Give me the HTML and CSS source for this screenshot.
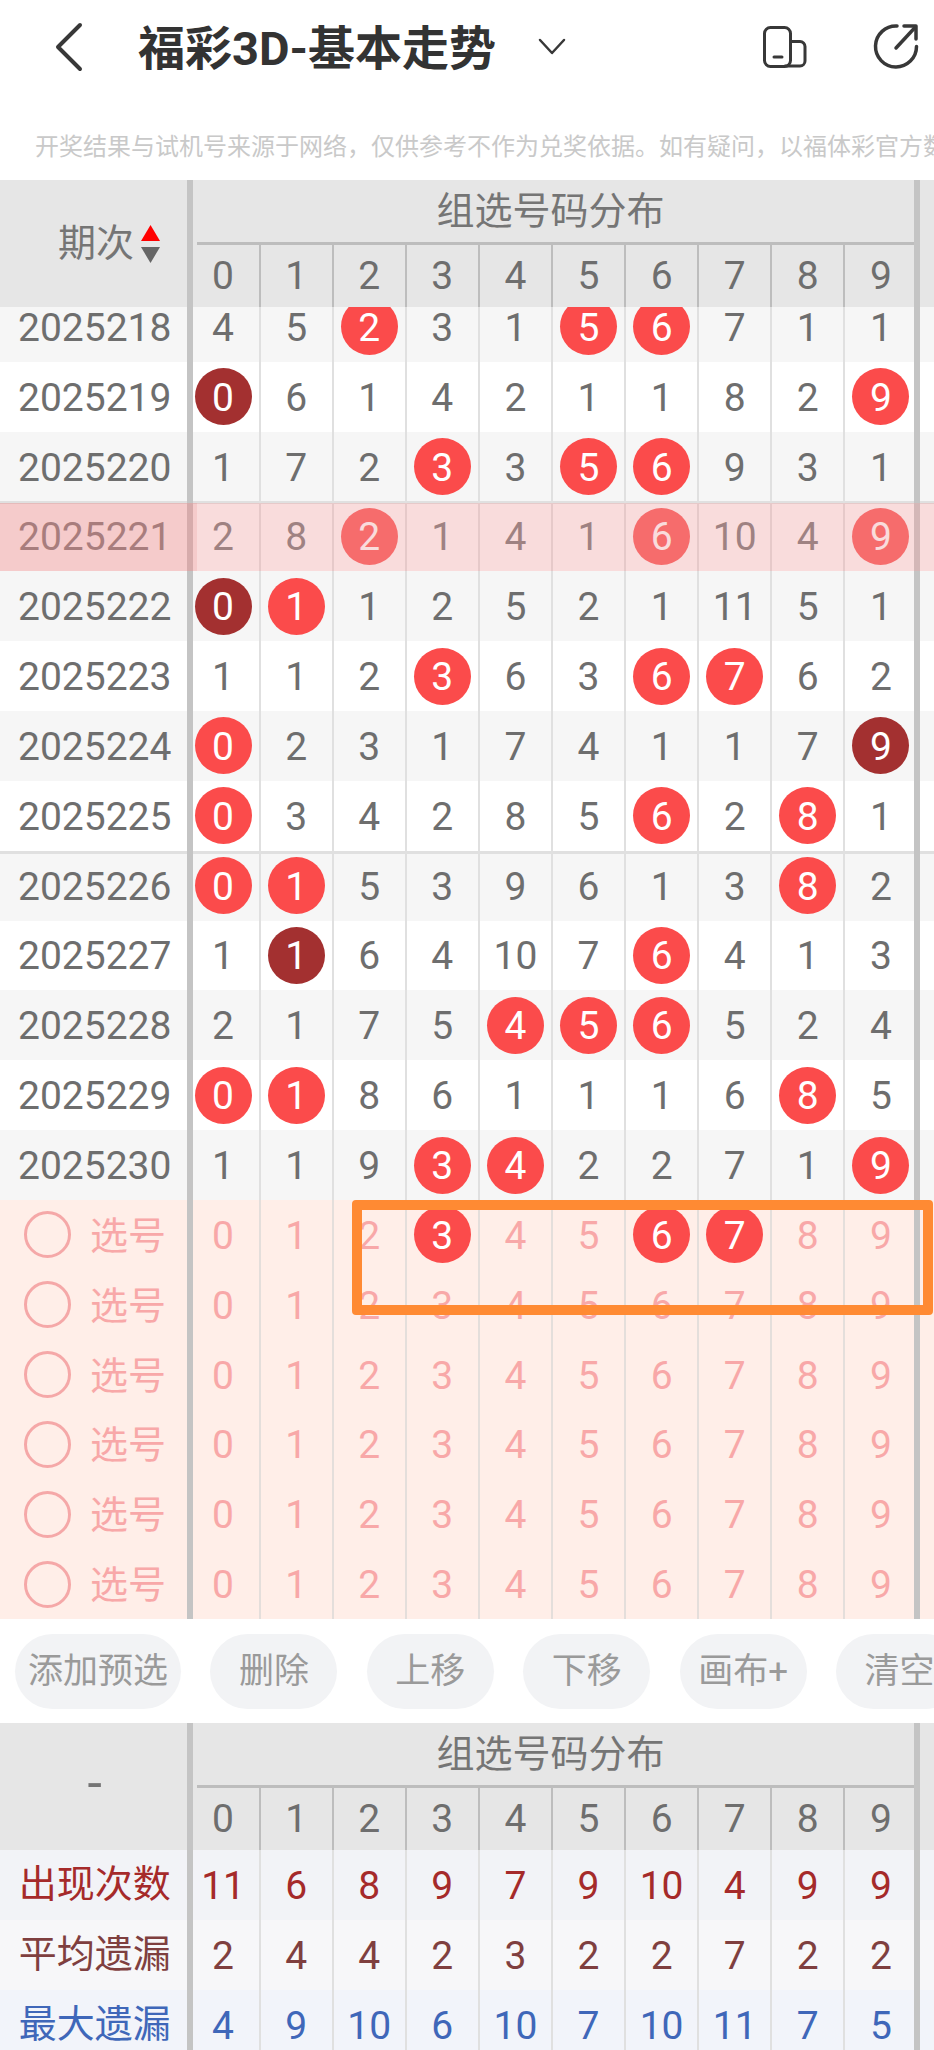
FILE: index.html
```html
<!DOCTYPE html>
<html lang="zh">

	<head>
		<meta charset="utf-8">
		<title>福彩3D-基本走势</title>
		<link rel="stylesheet" href="styles.css">
	</head>

	<body>

		<div class="top-bar">
			<svg class="icon-back" width="30" height="50" viewBox="0 0 30 50"><path d="M26 3 L4 25 L26 47"/></svg>
			<h1 class="title">福彩3D-基本走势</h1>
			<svg class="icon-down" width="28" height="18" viewBox="0 0 28 18"><path d="M2 2 L14 15 L26 2"/></svg>
			<svg class="icon-device" width="44" height="44" viewBox="0 0 44 44"><rect x="1.5" y="2.5" width="26" height="39" rx="6"/><path d="M11 32 H19"/><path d="M28 16.5 H37 A5 5 0 0 1 42 21.5 V36 A5 5 0 0 1 37 41 H22"/></svg>
			<svg class="icon-share" width="48" height="48" viewBox="0 0 48 48"><path d="M25 3 A20.5 20.5 0 1 0 44.5 23.5"/><path d="M24 25 L43 4.5"/><path d="M32 3 H44 V16"/></svg>
		</div>

		<p class="notice">开奖结果与试机号来源于网络，仅供参考不作为兑奖依据。如有疑问，以福体彩官方数据为准。</p>

		<div class="table">
			<div class="head">
				<div class="head-side"><span class="head-text">期次</span>
					<svg class="sort" width="19" height="38" viewBox="0 0 19 38"><path class="sort-up" d="M9.5 0 L19 16 H0 Z"/><path class="sort-down" d="M0 22 H19 L9.5 38 Z"/></svg>
				</div>
				<div class="head-title">组选号码分布</div>
				<div class="c">0</div><div class="c">1</div><div class="c">2</div><div class="c">3</div><div class="c">4</div><div class="c">5</div><div class="c">6</div><div class="c">7</div><div class="c">8</div><div class="c">9</div>
			</div>

			<div class="scroll-area">
				<div class="scroll-inner">
					<div class="row alt"><div class="side">2025218</div><div class="c">4</div><div class="c">5</div><div class="c"><span class="ball">2</span></div><div class="c">3</div><div class="c">1</div><div class="c"><span class="ball">5</span></div><div class="c"><span class="ball">6</span></div><div class="c">7</div><div class="c">1</div><div class="c">1</div></div>
					<div class="row"><div class="side">2025219</div><div class="c"><span class="ball dark">0</span></div><div class="c">6</div><div class="c">1</div><div class="c">4</div><div class="c">2</div><div class="c">1</div><div class="c">1</div><div class="c">8</div><div class="c">2</div><div class="c"><span class="ball">9</span></div></div>
					<div class="row alt"><div class="side">2025220</div><div class="c">1</div><div class="c">7</div><div class="c">2</div><div class="c"><span class="ball">3</span></div><div class="c">3</div><div class="c"><span class="ball">5</span></div><div class="c"><span class="ball">6</span></div><div class="c">9</div><div class="c">3</div><div class="c">1</div></div>
					<div class="row group-top current"><div class="side">2025221</div><div class="c">2</div><div class="c">8</div><div class="c"><span class="ball">2</span></div><div class="c">1</div><div class="c">4</div><div class="c">1</div><div class="c"><span class="ball">6</span></div><div class="c">10</div><div class="c">4</div><div class="c"><span class="ball">9</span></div></div>
					<div class="row alt"><div class="side">2025222</div><div class="c"><span class="ball dark">0</span></div><div class="c"><span class="ball">1</span></div><div class="c">1</div><div class="c">2</div><div class="c">5</div><div class="c">2</div><div class="c">1</div><div class="c">11</div><div class="c">5</div><div class="c">1</div></div>
					<div class="row"><div class="side">2025223</div><div class="c">1</div><div class="c">1</div><div class="c">2</div><div class="c"><span class="ball">3</span></div><div class="c">6</div><div class="c">3</div><div class="c"><span class="ball">6</span></div><div class="c"><span class="ball">7</span></div><div class="c">6</div><div class="c">2</div></div>
					<div class="row alt"><div class="side">2025224</div><div class="c"><span class="ball">0</span></div><div class="c">2</div><div class="c">3</div><div class="c">1</div><div class="c">7</div><div class="c">4</div><div class="c">1</div><div class="c">1</div><div class="c">7</div><div class="c"><span class="ball dark">9</span></div></div>
					<div class="row"><div class="side">2025225</div><div class="c"><span class="ball">0</span></div><div class="c">3</div><div class="c">4</div><div class="c">2</div><div class="c">8</div><div class="c">5</div><div class="c"><span class="ball">6</span></div><div class="c">2</div><div class="c"><span class="ball">8</span></div><div class="c">1</div></div>
					<div class="row alt group-top"><div class="side">2025226</div><div class="c"><span class="ball">0</span></div><div class="c"><span class="ball">1</span></div><div class="c">5</div><div class="c">3</div><div class="c">9</div><div class="c">6</div><div class="c">1</div><div class="c">3</div><div class="c"><span class="ball">8</span></div><div class="c">2</div></div>
					<div class="row"><div class="side">2025227</div><div class="c">1</div><div class="c"><span class="ball dark">1</span></div><div class="c">6</div><div class="c">4</div><div class="c">10</div><div class="c">7</div><div class="c"><span class="ball">6</span></div><div class="c">4</div><div class="c">1</div><div class="c">3</div></div>
					<div class="row alt"><div class="side">2025228</div><div class="c">2</div><div class="c">1</div><div class="c">7</div><div class="c">5</div><div class="c"><span class="ball">4</span></div><div class="c"><span class="ball">5</span></div><div class="c"><span class="ball">6</span></div><div class="c">5</div><div class="c">2</div><div class="c">4</div></div>
					<div class="row"><div class="side">2025229</div><div class="c"><span class="ball">0</span></div><div class="c"><span class="ball">1</span></div><div class="c">8</div><div class="c">6</div><div class="c">1</div><div class="c">1</div><div class="c">1</div><div class="c">6</div><div class="c"><span class="ball">8</span></div><div class="c">5</div></div>
					<div class="row alt"><div class="side">2025230</div><div class="c">1</div><div class="c">1</div><div class="c">9</div><div class="c"><span class="ball">3</span></div><div class="c"><span class="ball">4</span></div><div class="c">2</div><div class="c">2</div><div class="c">7</div><div class="c">1</div><div class="c"><span class="ball">9</span></div></div>
				</div>
			</div>

			<div class="picks">
				<div class="row"><div class="side pick-label"><span class="radio"></span>选号</div><div class="c">0</div><div class="c">1</div><div class="c">2</div><div class="c"><span class="ball">3</span></div><div class="c">4</div><div class="c">5</div><div class="c"><span class="ball">6</span></div><div class="c"><span class="ball">7</span></div><div class="c">8</div><div class="c">9</div></div>
				<div class="row"><div class="side pick-label"><span class="radio"></span>选号</div><div class="c">0</div><div class="c">1</div><div class="c">2</div><div class="c">3</div><div class="c">4</div><div class="c">5</div><div class="c">6</div><div class="c">7</div><div class="c">8</div><div class="c">9</div></div>
				<div class="row"><div class="side pick-label"><span class="radio"></span>选号</div><div class="c">0</div><div class="c">1</div><div class="c">2</div><div class="c">3</div><div class="c">4</div><div class="c">5</div><div class="c">6</div><div class="c">7</div><div class="c">8</div><div class="c">9</div></div>
				<div class="row"><div class="side pick-label"><span class="radio"></span>选号</div><div class="c">0</div><div class="c">1</div><div class="c">2</div><div class="c">3</div><div class="c">4</div><div class="c">5</div><div class="c">6</div><div class="c">7</div><div class="c">8</div><div class="c">9</div></div>
				<div class="row"><div class="side pick-label"><span class="radio"></span>选号</div><div class="c">0</div><div class="c">1</div><div class="c">2</div><div class="c">3</div><div class="c">4</div><div class="c">5</div><div class="c">6</div><div class="c">7</div><div class="c">8</div><div class="c">9</div></div>
				<div class="row"><div class="side pick-label"><span class="radio"></span>选号</div><div class="c">0</div><div class="c">1</div><div class="c">2</div><div class="c">3</div><div class="c">4</div><div class="c">5</div><div class="c">6</div><div class="c">7</div><div class="c">8</div><div class="c">9</div></div>
				<div class="orange-box"></div>
			</div>
		</div>

		<div class="button-bar">
			<button class="tool-button">添加预选</button>
			<button class="tool-button">删除</button>
			<button class="tool-button">上移</button>
			<button class="tool-button">下移</button>
			<button class="tool-button">画布+</button>
			<button class="tool-button">清空</button>
		</div>

		<div class="table">
			<div class="head">
				<div class="head-side head-center">-</div>
				<div class="head-title">组选号码分布</div>
				<div class="c">0</div><div class="c">1</div><div class="c">2</div><div class="c">3</div><div class="c">4</div><div class="c">5</div><div class="c">6</div><div class="c">7</div><div class="c">8</div><div class="c">9</div>
			</div>
			<div class="row stat stat-count"><div class="side">出现次数</div><div class="c">11</div><div class="c">6</div><div class="c">8</div><div class="c">9</div><div class="c">7</div><div class="c">9</div><div class="c">10</div><div class="c">4</div><div class="c">9</div><div class="c">9</div></div>
			<div class="row stat stat-avg"><div class="side">平均遗漏</div><div class="c">2</div><div class="c">4</div><div class="c">4</div><div class="c">2</div><div class="c">3</div><div class="c">2</div><div class="c">2</div><div class="c">7</div><div class="c">2</div><div class="c">2</div></div>
			<div class="row stat stat-max"><div class="side">最大遗漏</div><div class="c">4</div><div class="c">9</div><div class="c">10</div><div class="c">6</div><div class="c">10</div><div class="c">7</div><div class="c">10</div><div class="c">11</div><div class="c">7</div><div class="c">5</div></div>
		</div>

	</body>

</html>
```

FILE: styles.css
```css
* {
	margin: 0;
	padding: 0;
	box-sizing: border-box;
}

html, body {
	width: 934px;
	height: 2050px;
	overflow: hidden;
}

body {
	background: white;
	font-family: Roboto, "Noto Sans CJK SC", sans-serif;
	font-size: 39px;
	color: #6e6e6e;
}

/* top bar */

.top-bar {
	display: flex;
	align-items: center;
	height: 94px;
	padding-left: 54px;
}

.top-bar svg {
	flex: none;
	fill: none;
	stroke: #383838;
	stroke-linecap: round;
	stroke-linejoin: round;
}

.icon-back {
	stroke-width: 4;
}

.title {
	margin-left: 54px;
	padding-bottom: 5px;
	font-size: 47px;
	font-weight: bold;
	color: #333;
	white-space: nowrap;
}

.icon-down {
	margin-left: 42px;
	stroke-width: 2.5;
}

.icon-device {
	margin-left: 197px;
	stroke-width: 3;
}

.icon-share {
	margin-left: 65px;
	stroke-width: 3.5;
}

.notice {
	height: 86px;
	padding: 22px 0 0 35px;
	font-size: 24px;
	line-height: 62px;
	color: #c9c9c9;
	white-space: nowrap;
	overflow: hidden;
}

/* tables */

.table {
	position: relative;
}

.table::before,
.table::after {
	content: "";
	position: absolute;
	top: 0;
	bottom: 0;
	z-index: 1;
	background: #c4c4c4;
}

.table::before {
	left: 187px;
	width: 6px;
}

.table::after {
	left: 914px;
	width: 6px;
}

.head,
.row {
	display: grid;
	grid-template-columns: 186.5px repeat(10, 73.1px);
}

.head {
	grid-template-rows: 65px 62px;
	background: #e6e6e6;
}

.head-side {
	grid-row: 1 / 3;
	display: flex;
	align-items: center;
	padding-left: 58px;
	gap: 7px;
	font-size: 38px;
	color: #757575;
}

.head-text {
	margin-bottom: 9px;
}

.head-center {
	justify-content: center;
	padding: 0 0 6px 3px;
	font-size: 52px;
}

.sort-up {
	fill: #f00;
	stroke: none;
}

.sort-down {
	fill: #666;
	stroke: none;
}

.head-title {
	grid-column: 2 / 12;
	margin-left: 10px;
	margin-right: 3px;
	padding-right: 10px;
	padding-bottom: 3px;
	border-bottom: 3px solid #bdbdbd;
	text-align: center;
	font-size: 38px;
	line-height: 62px;
	color: #757575;
}

/* text sits a little under the middle of the row, balls do not */
.c {
	display: flex;
	align-items: center;
	justify-content: center;
	padding-top: 2px;
}

.c + .c {
	box-shadow: -1px 0 0 #e0e0e0, inset 1px 0 0 #e0e0e0;
}

.head .c {
	padding-top: 0;
}

.head .c + .c {
	box-shadow: -1px 0 0 #bdbdbd, inset 1px 0 0 #bdbdbd;
}

.row {
	height: 69.85px;
	position: relative;
}

.side {
	display: flex;
	align-items: center;
	justify-content: center;
	padding: 2px 0 0 3px;
}

.alt {
	background: #f6f6f6;
}

.ball {
	display: flex;
	align-items: center;
	justify-content: center;
	width: 57px;
	height: 57px;
	margin-top: -2px;
	padding-top: 2px;
	border-radius: 50%;
	background: #fb4b4b;
	color: #fff;
}

.dark {
	background: #a33030;
}

/* first row is half scrolled under the header */
.scroll-area {
	overflow: hidden;
}

.scroll-inner {
	margin-top: -15.05px;
}

.group-top {
	box-shadow: inset 0 3px 0 #e0e0e0;
}

.current::before,
.current::after {
	content: "";
	position: absolute;
	top: 2px;
	bottom: 0;
	left: 0;
	z-index: 2;
}

.current::before {
	right: 0;
	background: rgba(239, 163, 163, 0.38);
}

.current::after {
	width: 197px;
	background: rgba(229, 100, 100, 0.14);
}

/* pick rows */

.picks {
	position: relative;
	background: #ffeee8;
	color: #f8a8a8;
}

.picks .c + .c {
	box-shadow: -1px 0 0 #e4dedb, inset 1px 0 0 #e4dedb;
}

.pick-label {
	justify-content: flex-start;
	padding: 0 0 5px 24px;
	font-size: 38px;
}

.radio {
	width: 47px;
	height: 47px;
	margin: 5px 19px 0 0;
	border: 3px solid #f5a8a8;
	border-radius: 50%;
}

.orange-box {
	position: absolute;
	top: 0;
	left: 352px;
	width: 581px;
	height: 115px;
	border: 10px solid #ff8a33;
	border-radius: 4px;
	z-index: 3;
}

/* buttons */

.button-bar {
	display: flex;
	gap: 29.4px;
	height: 104px;
	padding: 15px 0 0 15px;
	overflow: hidden;
}

.tool-button {
	flex: none;
	min-width: 127px;
	height: 75px;
	padding: 0 13px 8px;
	border: none;
	border-radius: 37.5px;
	background: #f2f3f5;
	font-family: inherit;
	font-size: 35px;
	color: #9a9a9a;
}

/* stats */

.stat .side {
	padding: 0 0 8px 3px;
	font-size: 38px;
}

.stat-count {
	background: #f2f3f7;
	color: #a52a2a;
}

.stat-avg {
	background: #f7f7f9;
	color: #7f3f3f;
}

.stat-max {
	background: #f2f4fa;
	color: #3f67b9;
}
```
